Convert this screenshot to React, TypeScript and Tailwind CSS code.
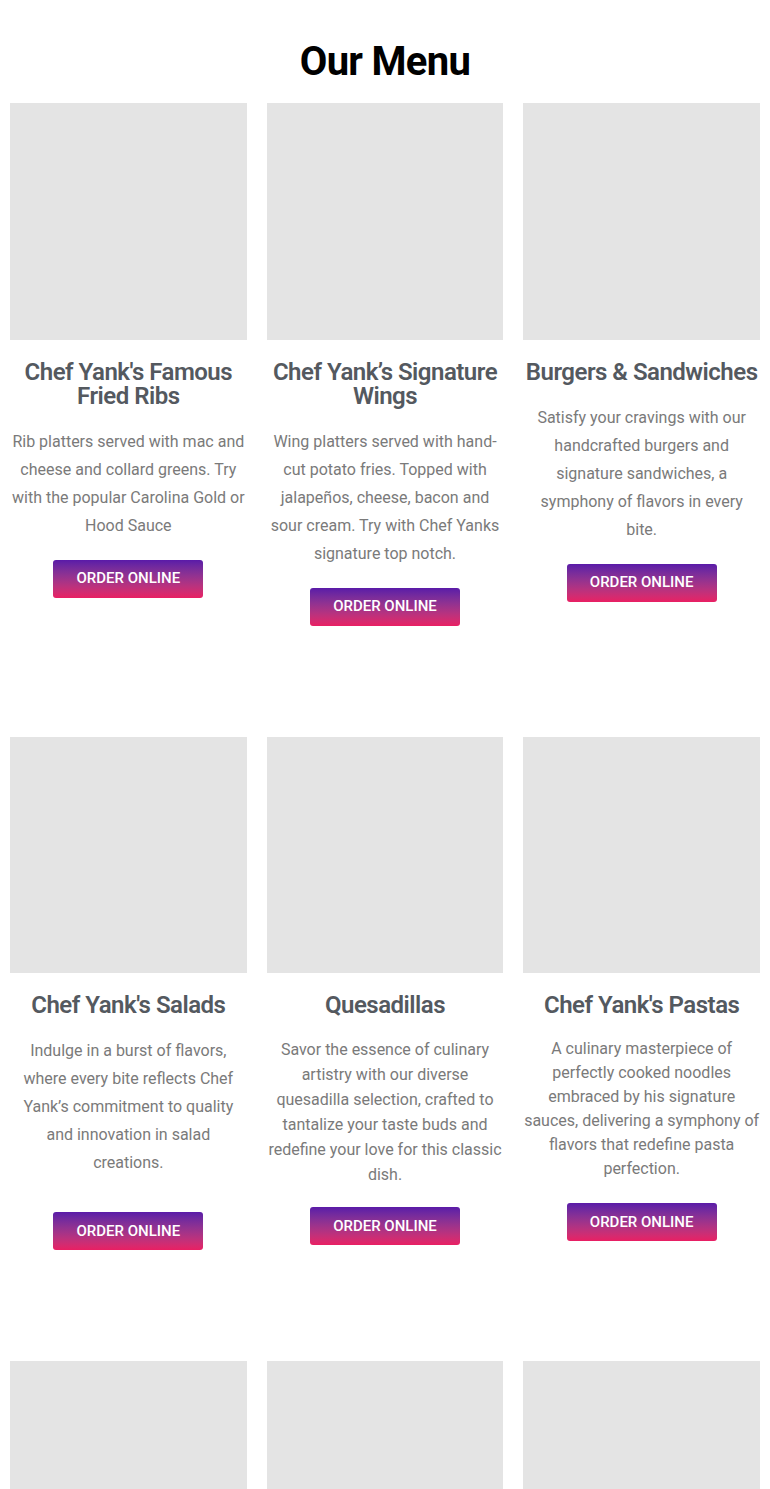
import React from "react";

type Item = { title: string; desc: string; lh: string; gap: string };

const rows: Item[][] = [
  [
    {
      title: "Chef Yank's Famous Fried Ribs",
      desc: "Rib platters served with mac and cheese and collard greens. Try with the popular Carolina Gold or Hood Sauce",
      lh: "leading-[28px]",
      gap: "mt-[20px]",
    },
    {
      title: "Chef Yank’s Signature Wings",
      desc: "Wing platters served with hand-cut potato fries. Topped with jalapeños, cheese, bacon and sour cream. Try with Chef Yanks signature top notch.",
      lh: "leading-[28px]",
      gap: "mt-[20px]",
    },
    {
      title: "Burgers & Sandwiches",
      desc: "Satisfy your cravings with our handcrafted burgers and signature sandwiches, a symphony of flavors in every bite.",
      lh: "leading-[28px]",
      gap: "mt-[20px]",
    },
  ],
  [
    {
      title: "Chef Yank's Salads",
      desc: "Indulge in a burst of flavors, where every bite reflects Chef Yank’s commitment to quality and innovation in salad creations.",
      lh: "leading-[28px]",
      gap: "mt-[35px]",
    },
    {
      title: "Quesadillas",
      desc: "Savor the essence of culinary artistry with our diverse quesadilla selection, crafted to tantalize your taste buds and redefine your love for this classic dish.",
      lh: "leading-[25px]",
      gap: "mt-[20px]",
    },
    {
      title: "Chef Yank's Pastas",
      desc: "A culinary masterpiece of perfectly cooked noodles embraced by his signature sauces, delivering a symphony of flavors that redefine pasta perfection.",
      lh: "leading-[24px]",
      gap: "mt-[22px]",
    },
  ],
];

function Card({ item }: { item: Item }) {
  return (
    <div className="flex flex-col items-center text-center">
      <div className="w-full aspect-square bg-[#e4e4e4]" />
      <h3 className="mt-[20px] text-[24px] leading-[24px] font-semibold tracking-[-0.5px] text-[#54595f]">
        {item.title}
      </h3>
      <p className={`mt-[20px] text-[16px] ${item.lh} text-[#7a7a7a]`}>{item.desc}</p>
      <a
        className={`${item.gap} flex h-[38px] w-[150px] items-center justify-center rounded-[3px] bg-gradient-to-b from-[#5a1aa8] to-[#e91e63] text-[15px] font-medium text-white`}
      >
        ORDER ONLINE
      </a>
    </div>
  );
}

export default function App() {
  return (
    <div className="min-h-[1489px] bg-white px-[10px] font-['Roboto',sans-serif]">
      <h1 className="pt-[38px] pb-[17px] text-center text-[40px] leading-[48px] font-bold tracking-[-0.7px] text-black">
        Our Menu
      </h1>
      <div className="flex flex-col gap-[111px]">
        {rows.map((row, i) => (
          <div key={i} className="grid grid-cols-3 items-start gap-x-[20px]">
            {row.map((item) => (
              <Card key={item.title} item={item} />
            ))}
          </div>
        ))}
        <div className="grid grid-cols-3 items-start gap-x-[20px]">
          <div className="w-full aspect-square bg-[#e4e4e4]" />
          <div className="w-full aspect-square bg-[#e4e4e4]" />
          <div className="w-full aspect-square bg-[#e4e4e4]" />
        </div>
      </div>
    </div>
  );
}
